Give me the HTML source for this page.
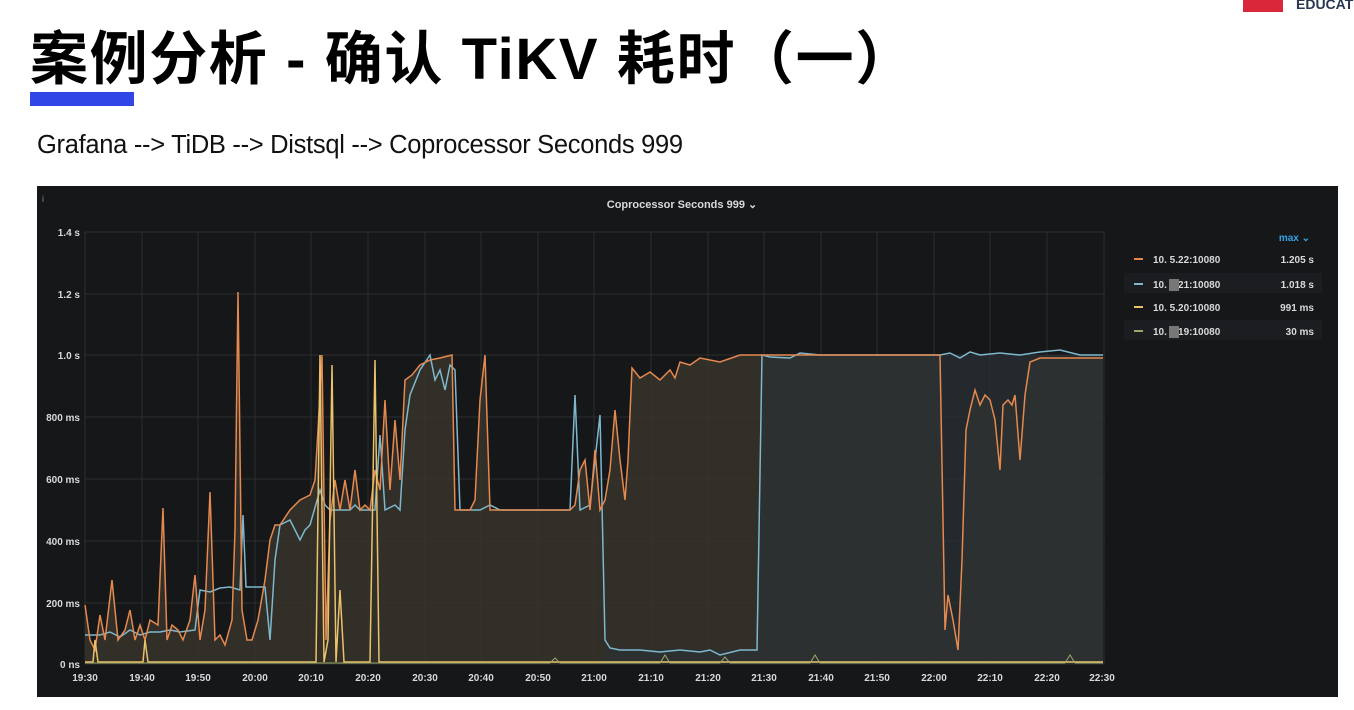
<!DOCTYPE html><html><head><meta charset="utf-8"><style>
body{margin:0;width:1354px;height:710px;background:#fff;position:relative;overflow:hidden;font-family:"Liberation Sans","Noto Sans CJK SC",sans-serif}
.t{position:absolute;left:30px;top:12px;font-size:58px;font-weight:bold;color:#000;letter-spacing:1.6px;white-space:nowrap}
.bar{position:absolute;left:30px;top:92px;width:104px;height:14px;background:#3146e6}
.s{position:absolute;left:37px;top:131px;font-size:25.5px;color:#111;letter-spacing:-0.3px;white-space:nowrap}
.logo{position:absolute;left:1243px;top:0;width:40px;height:12px;background:#d8283a}
.edu{position:absolute;left:1296px;top:-4px;font-size:14px;font-weight:bold;color:#2a3550}
</style></head><body>
<div class="t">案例分析 - 确认 TiKV 耗时（一）</div>
<div class="bar"></div>
<div class="s">Grafana --&gt; TiDB --&gt; Distsql --&gt; Coprocessor Seconds 999</div>
<div class="logo"></div><div class="edu">EDUCAT</div>
<svg style="position:absolute;left:0;top:0" width="1354" height="710" font-family="Liberation Sans, sans-serif">
<rect x="37" y="186" width="1301" height="511" fill="#161719"/>
<text x="682" y="208" fill="#d8d9da" font-size="11" font-weight="bold" text-anchor="middle">Coprocessor Seconds 999 ⌄</text>
<text x="42" y="202" fill="#888" font-size="9">i</text>
<g stroke="#2c2d30" stroke-width="1">
<line x1="85" y1="232" x2="1105" y2="232"/><line x1="85" y1="294" x2="1105" y2="294"/><line x1="85" y1="355" x2="1105" y2="355"/><line x1="85" y1="417" x2="1105" y2="417"/><line x1="85" y1="479" x2="1105" y2="479"/><line x1="85" y1="541" x2="1105" y2="541"/><line x1="85" y1="603" x2="1105" y2="603"/><line x1="85" y1="664" x2="1105" y2="664"/>
<line x1="85" y1="232" x2="85" y2="664"/><line x1="142" y1="232" x2="142" y2="664"/><line x1="198" y1="232" x2="198" y2="664"/><line x1="255" y1="232" x2="255" y2="664"/><line x1="311" y1="232" x2="311" y2="664"/><line x1="368" y1="232" x2="368" y2="664"/><line x1="425" y1="232" x2="425" y2="664"/><line x1="481" y1="232" x2="481" y2="664"/><line x1="538" y1="232" x2="538" y2="664"/><line x1="594" y1="232" x2="594" y2="664"/><line x1="651" y1="232" x2="651" y2="664"/><line x1="708" y1="232" x2="708" y2="664"/><line x1="764" y1="232" x2="764" y2="664"/><line x1="821" y1="232" x2="821" y2="664"/><line x1="877" y1="232" x2="877" y2="664"/><line x1="934" y1="232" x2="934" y2="664"/><line x1="990" y1="232" x2="990" y2="664"/><line x1="1047" y1="232" x2="1047" y2="664"/><line x1="1104" y1="232" x2="1104" y2="664"/>
</g>
<g fill="#d8d9da" font-size="10" font-weight="bold" text-anchor="end">
<text x="80" y="236">1.4 s</text><text x="80" y="298">1.2 s</text><text x="80" y="359">1.0 s</text><text x="80" y="421">800 ms</text><text x="80" y="483">600 ms</text><text x="80" y="545">400 ms</text><text x="80" y="607">200 ms</text><text x="80" y="668">0 ns</text>
</g>
<g fill="#d8d9da" font-size="10" font-weight="bold" text-anchor="middle">
<text x="85" y="681">19:30</text><text x="142" y="681">19:40</text><text x="198" y="681">19:50</text><text x="255" y="681">20:00</text><text x="311" y="681">20:10</text><text x="368" y="681">20:20</text><text x="425" y="681">20:30</text><text x="481" y="681">20:40</text><text x="538" y="681">20:50</text><text x="594" y="681">21:00</text><text x="651" y="681">21:10</text><text x="708" y="681">21:20</text><text x="764" y="681">21:30</text><text x="821" y="681">21:40</text><text x="877" y="681">21:50</text><text x="934" y="681">22:00</text><text x="990" y="681">22:10</text><text x="1047" y="681">22:20</text><text x="1102" y="681">22:30</text>
</g>
<polygon fill="#3a342c" opacity="0.8" points="85,664 85,605 90,640 95,650 100,615 105,640 112,580 118,640 125,630 130,610 135,640 140,625 145,640 150,620 158,625 163,508 167,640 172,625 178,630 183,640 190,620 195,575 200,640 205,610 210,492 215,640 220,635 225,645 232,620 235,530 238,292 242,610 247,640 252,640 258,620 265,580 270,540 275,525 280,525 290,510 300,500 310,495 315,480 318,430 322,355 326,640 330,520 335,480 340,510 345,480 350,510 355,470 360,510 365,505 370,510 375,470 380,490 385,400 390,490 395,420 400,480 405,380 412,375 420,365 430,360 440,358 452,355 455,510 470,510 475,500 480,400 485,355 490,510 570,510 575,505 580,470 585,460 590,510 595,450 600,510 605,500 610,470 615,410 620,460 625,500 628,460 632,368 640,378 650,372 660,380 670,370 675,378 680,362 690,365 700,358 720,362 740,355 940,355 945,630 948,595 953,620 958,650 962,560 966,430 970,410 975,390 980,405 985,395 990,400 995,420 1000,470 1003,405 1008,400 1012,405 1015,395 1020,460 1025,395 1030,362 1040,358 1060,358 1080,358 1103,358 1103,664"/>
<polygon fill="#2a3234" opacity="0.7" points="605,664 605,640 610,648 757,650 762,355 1103,355 1103,664"/>
<polyline fill="none" stroke="#7eb8cc" stroke-width="1.5" points="85,635 100,635 110,632 120,637 130,630 140,635 150,632 160,632 170,630 180,632 195,630 200,590 210,592 220,588 230,587 240,590 243,515 246,587 265,587 270,640 275,560 280,525 290,520 300,540 305,530 310,525 320,490 325,505 330,510 350,510 355,505 360,510 375,510 380,435 385,510 395,505 400,510 405,430 410,395 420,370 430,355 435,380 440,370 445,390 450,365 455,370 460,510 480,510 490,505 500,510 570,510 575,395 580,510 590,505 600,415 605,640 610,648 620,650 640,650 660,652 680,650 700,652 710,650 720,655 740,650 757,650 762,355 770,357 790,358 800,353 820,355 940,355 950,353 960,358 970,352 980,355 1000,353 1020,355 1040,352 1060,350 1080,355 1103,355"/>
<polyline fill="none" stroke="#e5894f" stroke-width="1.5" points="85,605 90,640 95,650 100,615 105,640 112,580 118,640 125,630 130,610 135,640 140,625 145,640 150,620 158,625 163,508 167,640 172,625 178,630 183,640 190,620 195,575 200,640 205,610 210,492 215,640 220,635 225,645 232,620 235,530 238,292 242,610 247,640 252,640 258,620 265,580 270,540 275,525 280,525 290,510 300,500 310,495 315,480 318,430 322,355 326,640 330,520 335,480 340,510 345,480 350,510 355,470 360,510 365,505 370,510 375,470 380,490 385,400 390,490 395,420 400,480 405,380 412,375 420,365 430,360 440,358 452,355 455,510 470,510 475,500 480,400 485,355 490,510 570,510 575,505 580,470 585,460 590,510 595,450 600,510 605,500 610,470 615,410 620,460 625,500 628,460 632,368 640,378 650,372 660,380 670,370 675,378 680,362 690,365 700,358 720,362 740,355 940,355 945,630 948,595 953,620 958,650 962,560 966,430 970,410 975,390 980,405 985,395 990,400 995,420 1000,470 1003,405 1008,400 1012,405 1015,395 1020,460 1025,395 1030,362 1040,358 1060,358 1080,358 1103,358"/>
<polyline fill="none" stroke="#eac26a" stroke-width="1.5" points="85,662 93,662 95,640 98,662 143,662 145,640 148,662 316,662 320,355 324,662 328,640 332,365 336,662 340,590 344,662 370,662 375,360 379,662 1103,662"/>
<polyline fill="none" stroke="#9aa868" stroke-width="1" points="85,663 550,663 555,658 560,663 660,663 665,655 670,663 720,663 725,657 730,663 810,663 815,655 820,663 1065,663 1070,655 1075,663 1103,663"/>
<text x="1310" y="241" fill="#33a2e5" font-size="10" font-weight="bold" text-anchor="end">max ⌄</text>
<rect x="1124" y="273" width="198" height="20" fill="#1c1d20"/><rect x="1124" y="320" width="198" height="20" fill="#1c1d20"/>
<g font-size="10" font-weight="bold" fill="#d8d9da">
<rect x="1134" y="258" width="9" height="2" fill="#e5894f"/><text x="1153" y="263">10.    5.22:10080</text><text x="1314" y="263" text-anchor="end">1.205 s</text>
<rect x="1134" y="283" width="9" height="2" fill="#7eb8cc"/><text x="1153" y="288">10.    5.21:10080</text><text x="1314" y="288" text-anchor="end">1.018 s</text>
<rect x="1134" y="306" width="9" height="2" fill="#eac26a"/><text x="1153" y="311">10.    5.20:10080</text><text x="1314" y="311" text-anchor="end">991 ms</text>
<rect x="1134" y="330" width="9" height="2" fill="#9aa868"/><text x="1153" y="335">10.    5.19:10080</text><text x="1314" y="335" text-anchor="end">30 ms</text>
</g>
<rect x="1169" y="279" width="10" height="12" fill="#777"/><rect x="1169" y="326" width="10" height="12" fill="#777"/>
</svg>
</body></html>
